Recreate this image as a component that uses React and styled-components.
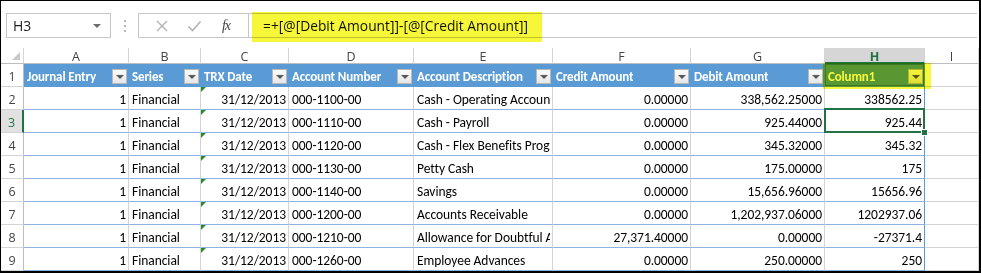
import React from 'react';
import styled, { createGlobalStyle, css } from 'styled-components';

const GlobalStyle = createGlobalStyle`
  html, body {
    margin: 0;
    padding: 0;
    background: #fff;
  }
  body {
    font-family: 'Open Sans', 'Noto Sans', sans-serif;
  }
`;

const cellFont = `'Carlito', 'Lato', 'Liberation Sans', sans-serif`;
const uiFont = `'Open Sans', 'Noto Sans', sans-serif`;

const Frame = styled.div`
  width: 981px;
  height: 273px;
  box-sizing: border-box;
  border-style: solid;
  border-color: #000;
  border-width: 1px 2px 2px 1px;
  background: #fff;
  overflow: hidden;
  display: flex;
  flex-direction: column;
`;

const FormulaBar = styled.div`
  display: flex;
  align-items: stretch;
  height: 25px;
  margin-top: 12px;
  padding-left: 5px;
  padding-right: 2px;
`;

const NameBox = styled.div`
  width: 105px;
  box-sizing: border-box;
  border: 1px solid #c6c6c6;
  display: flex;
  align-items: center;
  justify-content: space-between;
  padding: 0 9px 0 6px;
  font-family: ${uiFont};
  font-size: 14px;
  color: #222;
`;

const Caret = styled.span`
  width: 0;
  height: 0;
  border-left: 4px solid transparent;
  border-right: 4px solid transparent;
  border-top: 4px solid #6d6d6d;
`;

const Grip = styled.div`
  width: 27px;
  display: flex;
  align-items: center;
  justify-content: center;
`;

const ButtonBox = styled.div`
  width: 111px;
  box-sizing: border-box;
  border: 1px solid #c6c6c6;
  display: flex;
  align-items: center;
  padding-left: 14px;
  gap: 14px;
`;

const ToolIcon = styled.span`
  width: 18px;
  display: flex;
  align-items: center;
  justify-content: center;
`;

const Fx = styled.span`
  font-family: 'Liberation Serif', serif;
  font-style: italic;
  font-size: 14px;
  color: #444;
  letter-spacing: -1px;
`;

const FormulaInput = styled.div`
  flex: 1;
  position: relative;
  border-top: 1px solid #c6c6c6;
  border-bottom: 1px solid #c6c6c6;
  display: flex;
  align-items: center;
  padding-left: 14px;
  font-family: ${uiFont};
  font-size: 13.8px;
  color: #111;
`;

const FormulaMark = styled.span`
  position: absolute;
  left: 3px;
  top: -2px;
  width: 290px;
  height: 30px;
  background: #f7f73a;
  mix-blend-mode: multiply;
  pointer-events: none;
`;

const Sheet = styled.div`
  margin-top: 10px;
  display: grid;
  grid-template-columns: 23px 105px 72px 88px 125px 139px 138px 134px 100px 1fr;
  grid-template-rows: 16px repeat(9, 23px);
`;

const Corner = styled.div`
  box-sizing: border-box;
  border-right: 1px solid #d4d4d4;
  border-bottom: 1px solid #bdbdbd;
  display: flex;
  align-items: flex-end;
  justify-content: flex-end;
  padding: 0 3px 3px 0;
  &::before {
    content: '';
    width: 0;
    height: 0;
    border-left: 8px solid transparent;
    border-bottom: 8px solid #c9c9c9;
  }
`;

const ColLetter = styled.div`
  box-sizing: border-box;
  border-right: 1px solid #d4d4d4;
  border-bottom: 1px solid #bdbdbd;
  display: flex;
  align-items: center;
  justify-content: center;
  padding-top: 2px;
  font-family: ${uiFont};
  font-size: 12.5px;
  color: #444;
  ${(p) =>
    p.$active &&
    css`
      background: #d6d6d6;
      color: #217346;
      font-weight: 700;
      border-bottom: 2px solid #217346;
    `}
`;

const RowNum = styled.div`
  box-sizing: border-box;
  border-right: 1px solid #bdbdbd;
  border-bottom: 1px solid #d4d4d4;
  display: flex;
  align-items: center;
  justify-content: center;
  padding-top: 3px;
  font-family: ${uiFont};
  font-size: 12.5px;
  color: #444;
  ${(p) =>
    p.$active &&
    css`
      background: #e1e1e1;
      color: #217346;
      border-right: 2px solid #217346;
    `}
`;

const HeadCell = styled.div`
  box-sizing: border-box;
  background: #5b9bd5;
  border-right: 1px solid #5b9bd5;
  border-bottom: 1px solid #5b9bd5;
  display: flex;
  align-items: center;
  justify-content: space-between;
  padding: 2px 1px 0 3px;
  font-family: ${cellFont};
  font-size: 13px;
  letter-spacing: -0.15px;
  font-weight: 700;
  color: #fff;
  white-space: nowrap;
  position: relative;
  ${(p) =>
    p.$marked &&
    css`
      box-shadow: inset 0 0 0 1px #3f78ad;
      &::after {
        content: '';
        position: absolute;
        left: -2px;
        top: -1px;
        right: -7px;
        bottom: -3px;
        background: #f8f83c;
        mix-blend-mode: multiply;
        z-index: 2;
        pointer-events: none;
      }
    `}
`;

const HeadLabel = styled.span`
  overflow: hidden;
`;

const FilterButton = styled.span`
  flex: none;
  width: 15px;
  height: 15px;
  box-sizing: border-box;
  background: linear-gradient(#fbfbfb, #e6e6e6);
  border: 1px solid #b9b9b9;
  display: flex;
  align-items: center;
  justify-content: center;
  &::before {
    content: '';
    width: 0;
    height: 0;
    border-left: 4px solid transparent;
    border-right: 4px solid transparent;
    border-top: 4px solid #595959;
    margin-top: 1px;
  }
`;

const Cell = styled.div`
  box-sizing: border-box;
  position: relative;
  border-right: 1px solid ${(p) => (p.$edge ? '#5b9bd5' : '#d4d4d4')};
  border-bottom: 1px solid ${(p) => (p.$outside ? '#d4d4d4' : '#8eb4e3')};
  display: flex;
  align-items: center;
  justify-content: ${(p) => (p.$align === 'right' ? 'flex-end' : 'flex-start')};
  padding: 3px 2px 0 3px;
  font-family: ${cellFont};
  font-size: 13.5px;
  letter-spacing: -0.05px;
  color: #000;
  white-space: nowrap;
  overflow: ${(p) => (p.$selected ? 'visible' : 'hidden')};
  ${(p) =>
    p.$flag &&
    css`
      &::before {
        content: '';
        position: absolute;
        left: 0;
        top: 0;
        width: 0;
        height: 0;
        border-top: 5px solid #2a8a2e;
        border-right: 5px solid transparent;
      }
    `}
  ${(p) =>
    p.$selected &&
    css`
      &::after {
        content: '';
        position: absolute;
        left: -1px;
        top: -2px;
        right: -1px;
        bottom: -1px;
        border: 2px solid #217346;
        z-index: 3;
      }
    `}
`;

const FillHandle = styled.span`
  position: absolute;
  right: -4px;
  bottom: -4px;
  width: 5px;
  height: 5px;
  background: #217346;
  border: 1px solid #fff;
  z-index: 4;
`;

const CellText = styled.span`
  overflow: hidden;
`;

const letters = ['A', 'B', 'C', 'D', 'E', 'F', 'G', 'H', 'I'];
const headers = [
  'Journal Entry',
  'Series',
  'TRX Date',
  'Account Number',
  'Account Description',
  'Credit Amount',
  'Debit Amount',
  'Column1',
];
const align = ['right', 'left', 'right', 'left', 'left', 'right', 'right', 'right'];

const rows = [
  ['1', 'Financial', '31/12/2013', '000-1100-00', 'Cash - Operating Account', '0.00000', '338,562.25000', '338562.25'],
  ['1', 'Financial', '31/12/2013', '000-1110-00', 'Cash - Payroll', '0.00000', '925.44000', '925.44'],
  ['1', 'Financial', '31/12/2013', '000-1120-00', 'Cash - Flex Benefits Program', '0.00000', '345.32000', '345.32'],
  ['1', 'Financial', '31/12/2013', '000-1130-00', 'Petty Cash', '0.00000', '175.00000', '175'],
  ['1', 'Financial', '31/12/2013', '000-1140-00', 'Savings', '0.00000', '15,656.96000', '15656.96'],
  ['1', 'Financial', '31/12/2013', '000-1200-00', 'Accounts Receivable', '0.00000', '1,202,937.06000', '1202937.06'],
  ['1', 'Financial', '31/12/2013', '000-1210-00', 'Allowance for Doubtful Accounts', '27,371.40000', '0.00000', '-27371.4'],
  ['1', 'Financial', '31/12/2013', '000-1260-00', 'Employee Advances', '0.00000', '250.00000', '250'],
];

const CrossIcon = () => (
  <svg width="14" height="14" viewBox="0 0 14 14">
    <path d="M2 2 L12 12 M12 2 L2 12" stroke="#b3b3b3" strokeWidth="1.4" fill="none" />
  </svg>
);

const CheckIcon = () => (
  <svg width="15" height="14" viewBox="0 0 15 14">
    <path d="M1.5 7.5 L5.5 11.5 L13.5 2.5" stroke="#b3b3b3" strokeWidth="1.6" fill="none" />
  </svg>
);

const GripIcon = () => (
  <svg width="4" height="14" viewBox="0 0 4 14">
    <circle cx="2" cy="2" r="1.1" fill="#a6a6a6" />
    <circle cx="2" cy="7" r="1.1" fill="#a6a6a6" />
    <circle cx="2" cy="12" r="1.1" fill="#a6a6a6" />
  </svg>
);

const App = () => {
  return (
    <Frame>
      <GlobalStyle />
      <FormulaBar>
        <NameBox>
          H3
          <Caret />
        </NameBox>
        <Grip>
          <GripIcon />
        </Grip>
        <ButtonBox>
          <ToolIcon>
            <CrossIcon />
          </ToolIcon>
          <ToolIcon>
            <CheckIcon />
          </ToolIcon>
          <ToolIcon>
            <Fx>fx</Fx>
          </ToolIcon>
        </ButtonBox>
        <FormulaInput>
          <FormulaMark />
          =+[@[Debit Amount]]-[@[Credit Amount]]
        </FormulaInput>
      </FormulaBar>

      <Sheet>
        <Corner />
        {letters.map((l) => (
          <ColLetter key={l} $active={l === 'H'}>
            {l}
          </ColLetter>
        ))}

        <RowNum>1</RowNum>
        {headers.map((h, i) => (
          <HeadCell key={h} $marked={i === 7}>
            <HeadLabel>{h}</HeadLabel>
            <FilterButton />
          </HeadCell>
        ))}
        <Cell $outside />

        {rows.map((row, r) => (
          <React.Fragment key={r}>
            <RowNum $active={r === 1}>{r + 2}</RowNum>
            {row.map((v, c) => (
              <Cell
                key={c}
                $align={align[c]}
                $flag={c === 2}
                $edge={c === 7}
                $selected={r === 1 && c === 7}
              >
                <CellText>{v}</CellText>
                {r === 1 && c === 7 && <FillHandle />}
              </Cell>
            ))}
            <Cell $outside />
          </React.Fragment>
        ))}
      </Sheet>
    </Frame>
  );
};

export default App;
